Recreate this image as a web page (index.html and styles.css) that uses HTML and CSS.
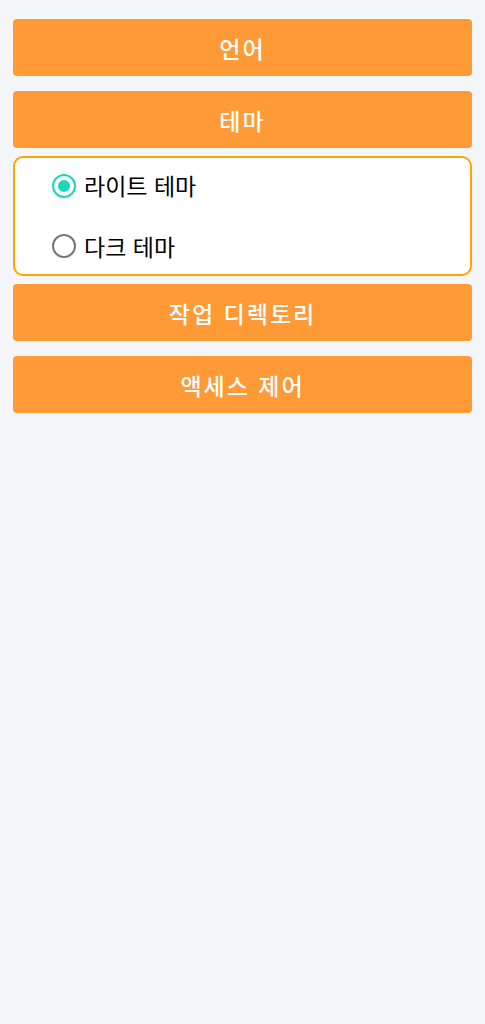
FILE: index.html
```html
<!DOCTYPE html>
<html lang="ko">
<head>
    <meta charset="UTF-8">
    <meta name="viewport" content="width=device-width, initial-scale=1.0">
    <title>설정</title>
    <link rel="stylesheet" href="styles.css">
</head>
<body>
    <div id="settings">
        <button class="section-btn" type="button">언어</button>
        <button class="section-btn open" type="button">테마</button>

        <div class="theme-panel">
            <label class="theme-option">
                <input type="radio" name="theme" value="light" checked>
                <span class="radio-mark"></span>
                <span class="option-text">라이트 테마</span>
            </label>
            <label class="theme-option">
                <input type="radio" name="theme" value="dark">
                <span class="radio-mark"></span>
                <span class="option-text">다크 테마</span>
            </label>
        </div>

        <button class="section-btn" type="button">작업 디렉토리</button>
        <button class="section-btn" type="button">액세스 제어</button>
    </div>
</body>
</html>
```

FILE: styles.css
```css
body {
    margin: 0;
    background-color: #f5f6fa;
    font-family: "Noto Sans CJK KR", "Noto Sans", sans-serif;
}

#settings {
    display: flex;
    flex-direction: column;
    padding: 19px 13px;
}

.section-btn {
    height: 57px;
    border: none;
    border-radius: 4px;
    background-color: #ff9a36;
    color: #fff;
    font-family: inherit;
    font-size: 23px;
    font-weight: 500;
    letter-spacing: 2px;
    cursor: pointer;
    margin-bottom: 15px;
}

.section-btn.open {
    margin-bottom: 8px;
}

.theme-panel {
    display: flex;
    flex-direction: column;
    gap: 5px;
    background-color: #fff;
    border: 2px solid #ffa400;
    border-radius: 10px;
    padding: 0 0 0 37px;
    height: 116px;
    margin-bottom: 8px;
}

.theme-option {
    display: flex;
    align-items: center;
    height: 56px;
    cursor: pointer;
}

.theme-option input {
    display: none;
}

.radio-mark {
    width: 20px;
    height: 20px;
    border: 2.5px solid #767676;
    border-radius: 50%;
    position: relative;
    margin-right: 8px;
}

.theme-option input:checked + .radio-mark {
    border-color: #1dd6c1;
}

.theme-option input:checked + .radio-mark::after {
    content: "";
    position: absolute;
    top: 4px;
    left: 4px;
    width: 12px;
    height: 12px;
    border-radius: 50%;
    background-color: #1dd6c1;
}

.option-text {
    font-size: 23px;
    color: #000;
    line-height: 1;
}
```
